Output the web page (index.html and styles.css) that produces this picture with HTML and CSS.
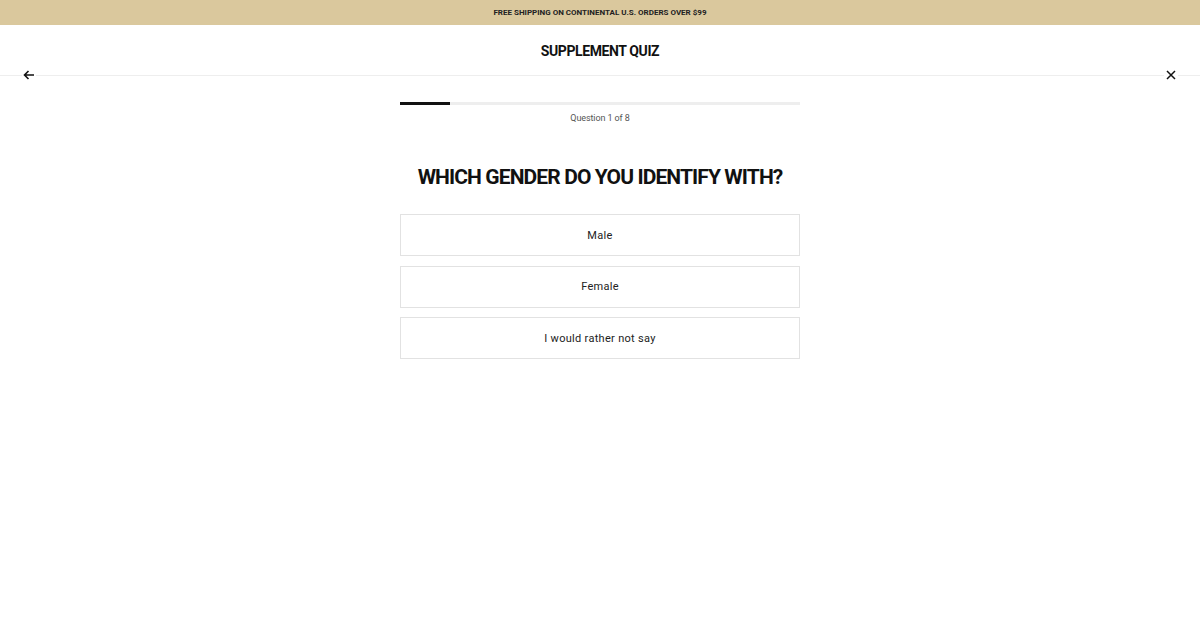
FILE: index.html
```html
<!DOCTYPE html>
<html lang="en">
<head>
<meta charset="utf-8">
<title>Supplement Quiz</title>
<link rel="stylesheet" href="styles.css">
</head>
<body>
<div class="promo">FREE SHIPPING ON CONTINENTAL U.S. ORDERS OVER $99</div>
<header class="quiz-header">
  <h1 class="quiz-title">SUPPLEMENT QUIZ</h1>
  <div class="nav-row">
    <button class="icon-btn back" aria-label="Back">
      <svg width="12" height="12" viewBox="0 0 12 12"><path d="M11 6H1.5M5.5 2L1.5 6l4 4" fill="none" stroke="#111" stroke-width="1.6"/></svg>
    </button>
    <button class="icon-btn close" aria-label="Close">
      <svg width="10" height="10" viewBox="0 0 10 10"><path d="M1 1l8 8M9 1L1 9" fill="none" stroke="#111" stroke-width="1.5"/></svg>
    </button>
  </div>
</header>
<main class="quiz">
  <div class="progress"><div class="progress-fill" style="width:12.5%"></div></div>
  <p class="step">Question 1 of 8</p>
  <h2 class="question">WHICH GENDER DO YOU IDENTIFY WITH?</h2>
  <div class="options">
    <button class="option">Male</button>
    <button class="option">Female</button>
    <button class="option">I would rather not say</button>
  </div>
</main>
</body>
</html>
```
FILE: styles.css
```css
* { box-sizing: border-box; }
html, body { margin: 0; padding: 0; background: #fff; }
body { font-family: "Roboto", "Liberation Sans", sans-serif; color: #111; }
.promo {
  height: 25px;
  background: #dac89d;
  display: flex;
  align-items: center;
  justify-content: center;
  font-size: 8px;
  font-weight: 700;
  letter-spacing: 0;
  color: #222;
}
.quiz-header { display: flex; flex-direction: column; }
.quiz-title {
  margin: 0;
  height: 50px;
  display: flex;
  align-items: center;
  justify-content: center;
  font-size: 14px;
  font-weight: 700;
  letter-spacing: -0.4px;
  padding-top: 1px;
}
.nav-row {
  position: relative;
  height: 1px;
  background: #eeeeee;
}
.icon-btn {
  position: absolute;
  top: -6px;
  background: #fff;
  border: 0;
  padding: 0;
  width: 14px;
  height: 12px;
  display: flex;
  align-items: center;
  justify-content: center;
  cursor: pointer;
}
.back { left: 22px; }
.close { right: 22px; }
.quiz {
  width: 400px;
  margin: 0 auto;
  padding-top: 26px;
  display: flex;
  flex-direction: column;
}
.progress { height: 3px; background: #eeeeee; }
.progress-fill { height: 100%; background: #111; }
.step {
  margin: 8px 0 0;
  text-align: center;
  font-size: 9px;
  color: #555;
  letter-spacing: -0.1px;
}
.question {
  margin: 41px 0 0;
  text-align: center;
  font-size: 21px;
  font-weight: 700;
  letter-spacing: -0.9px;
  line-height: 26px;
}
.options {
  margin-top: 24px;
  display: flex;
  flex-direction: column;
  gap: 9.5px;
}
.option {
  height: 42px;
  border: 1px solid #e2e2e2;
  background: #fff;
  font-family: inherit;
  font-size: 11px;
  color: #222;
  letter-spacing: 0.3px;
  cursor: pointer;
}
```
